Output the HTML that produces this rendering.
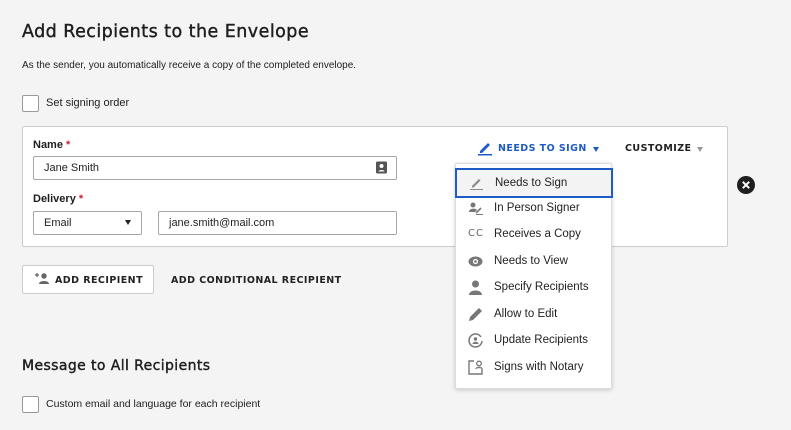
<!DOCTYPE html>
<html><head><meta charset="utf-8"><style>
*{box-sizing:border-box;margin:0;padding:0}
body{width:791px;height:430px;background:#f4f4f4;font-family:"Liberation Sans",Arial,Helvetica,sans-serif;color:#1e1e1e;position:relative;overflow:hidden;font-size:11px}
.a{position:absolute}
.h{font-family:"DejaVu Sans",sans-serif;-webkit-text-stroke:0.4px #1e1e1e;white-space:nowrap}
.cb{width:17px;height:17px;border:1px solid #999;border-radius:2px;background:#fff}
.caps{font-family:"DejaVu Sans",sans-serif;font-size:9.5px;font-weight:bold;letter-spacing:0.45px;white-space:nowrap}
.inp{background:#fff;border:1px solid #a6a6a6;border-radius:2px;height:24px;line-height:22px;padding-left:10px;font-size:11px}
.lbl{font-weight:bold;font-size:11px}
.lbl span{color:#c8262e}
.menu{left:455px;top:163px;width:157px;height:226px;background:#fff;border:1px solid #ddd;box-shadow:0 1px 4px rgba(0,0,0,.2);border-radius:2px}
.it{position:absolute;left:0;height:26px;width:100%;line-height:26px;padding-left:38px;font-size:11.5px;color:#222}
.ic{position:absolute;left:12px;top:6px;width:15px;height:15px}
</style></head><body>
<div class="a h" style="left:22px;top:22px;font-size:17.5px;letter-spacing:0.45px">Add Recipients to the Envelope</div>
<div class="a" style="left:22px;top:60px;font-size:10px;">As the sender, you automatically receive a copy of the completed envelope.</div>
<div class="a cb" style="left:22px;top:95px"></div>
<div class="a" style="left:46px;top:97px;font-size:11px">Set signing order</div>

<div class="a" style="left:22px;top:126px;width:706px;height:121px;background:#fff;border:1px solid #ccc;border-radius:2px"></div>
<div class="a lbl" style="left:33px;top:139px">Name <span>*</span></div>
<div class="a inp" style="left:33px;top:156px;width:364px">Jane Smith</div>
<svg class="a" style="left:375px;top:161px" width="13" height="13" viewBox="0 0 13 13"><rect x="1" y="0.5" width="11" height="12" rx="1.5" fill="#555"/><circle cx="6.5" cy="5" r="2" fill="#fff"/><path d="M3.5 10.5c0-2 6-2 6 0z" fill="#fff"/></svg>
<div class="a lbl" style="left:33px;top:193px">Delivery <span>*</span></div>
<div class="a inp" style="left:33px;top:211px;width:109px">Email</div>
<div class="a" style="left:125px;top:220px;width:0;height:0;border-left:3.5px solid transparent;border-right:3.5px solid transparent;border-top:5px solid #222"></div>
<div class="a inp" style="left:158px;top:211px;width:239px">jane.smith@mail.com</div>

<svg class="a" style="left:477px;top:140px" width="16" height="16" viewBox="0 0 16 16"><path d="M3 11L11 3l2 2-8 8H3z" fill="#1f5bc4"/><rect x="1" y="14" width="14" height="1.5" fill="#1f5bc4"/></svg>
<div class="a caps" style="left:498px;top:143px;color:#1f5bc4">NEEDS TO SIGN</div>
<div class="a" style="left:593px;top:147px;border-left:3.5px solid transparent;border-right:3.5px solid transparent;border-top:5px solid #1f5bc4"></div>
<div class="a caps" style="left:625px;top:143px;color:#222">CUSTOMIZE</div>
<div class="a" style="left:697px;top:147px;border-left:3.5px solid transparent;border-right:3.5px solid transparent;border-top:5px solid #999"></div>
<svg class="a" style="left:737px;top:176px" width="18" height="18" viewBox="0 0 18 18"><circle cx="9" cy="9" r="9" fill="#1e1e1e"/><path d="M5.8 5.8l6.4 6.4M12.2 5.8l-6.4 6.4" stroke="#fff" stroke-width="2"/></svg>

<div class="a" style="left:22px;top:265px;width:132px;height:29px;background:#fff;border:1px solid #ccc;border-radius:2px"></div>
<svg class="a" style="left:34px;top:272px" width="16" height="14" viewBox="0 0 16 14"><path d="M1 3h4M3 1v4" stroke="#666" stroke-width="1.3"/><circle cx="10" cy="4" r="2.7" fill="#666"/><path d="M5 12c0-4 10-4 10 0z" fill="#666"/></svg>
<div class="a caps" style="left:55px;top:275px;color:#222">ADD RECIPIENT</div>
<div class="a caps" style="left:171px;top:275px;color:#222">ADD CONDITIONAL RECIPIENT</div>

<div class="a h" style="left:22px;top:358px;font-size:14px;letter-spacing:0.4px">Message to All Recipients</div>
<div class="a cb" style="left:22px;top:396px"></div>
<div class="a" style="left:46px;top:398px;font-size:10.5px">Custom email and language for each recipient</div>

<div class="a menu">
<div class="it" style="top:4px;height:30px;line-height:26px;background:#f3f3f3;border:2px solid #1f5bc4;left:-1px;width:158px"><svg class="ic" style="top:6px" viewBox="0 0 15 15"><path d="M3 10L10 3l1.5 1.5-7 7H3z" fill="#888"/><rect x="1" y="13" width="13" height="1" fill="#888"/></svg>Needs to Sign</div>
<div class="it" style="top:31px"><svg class="ic" viewBox="0 0 15 15"><circle cx="5" cy="4" r="2.5" fill="#777"/><path d="M1 11c0-4 7-4 8-2l-2 2z" fill="#777"/><path d="M8 12l5-5" stroke="#777" stroke-width="1.6"/><rect x="8" y="13" width="7" height="1" fill="#777"/></svg>In Person Signer</div>
<div class="it" style="top:57px"><span style="position:absolute;left:12px;font-family:'DejaVu Sans',sans-serif;font-size:10px;color:#666;letter-spacing:1px">CC</span>Receives a Copy</div>
<div class="it" style="top:84px"><svg class="ic" viewBox="0 0 15 15"><ellipse cx="7.5" cy="7.5" rx="7" ry="5" fill="#777"/><circle cx="7.5" cy="7.5" r="2.6" fill="#fff"/><circle cx="7.5" cy="7.5" r="1.3" fill="#777"/></svg>Needs to View</div>
<div class="it" style="top:110px"><svg class="ic" viewBox="0 0 15 15"><circle cx="7.5" cy="4" r="3.5" fill="#777"/><path d="M1 15c0-6 13-6 13 0z" fill="#777"/></svg>Specify Recipients</div>
<div class="it" style="top:137px"><svg class="ic" viewBox="0 0 15 15"><path d="M1 14l1-4 9-9 3 3-9 9z" fill="#777"/></svg>Allow to Edit</div>
<div class="it" style="top:163px"><svg class="ic" viewBox="0 0 15 15"><path d="M13 4A6.5 6.5 0 1 0 14 8" stroke="#777" stroke-width="1.5" fill="none"/><circle cx="7.5" cy="6" r="1.7" fill="#777"/><path d="M4.5 11c0-3 6-3 6 0z" fill="#777"/></svg>Update Recipients</div>
<div class="it" style="top:190px"><svg class="ic" viewBox="0 0 15 15"><path d="M6 1H1v13h13V9" stroke="#777" stroke-width="1.4" fill="none"/><circle cx="11" cy="3.5" r="2.3" stroke="#777" stroke-width="1.3" fill="none"/><path d="M8 9c0-2 6-2 6 0" stroke="#777" stroke-width="1.3" fill="none"/></svg>Signs with Notary</div>
</div>
</body></html>
